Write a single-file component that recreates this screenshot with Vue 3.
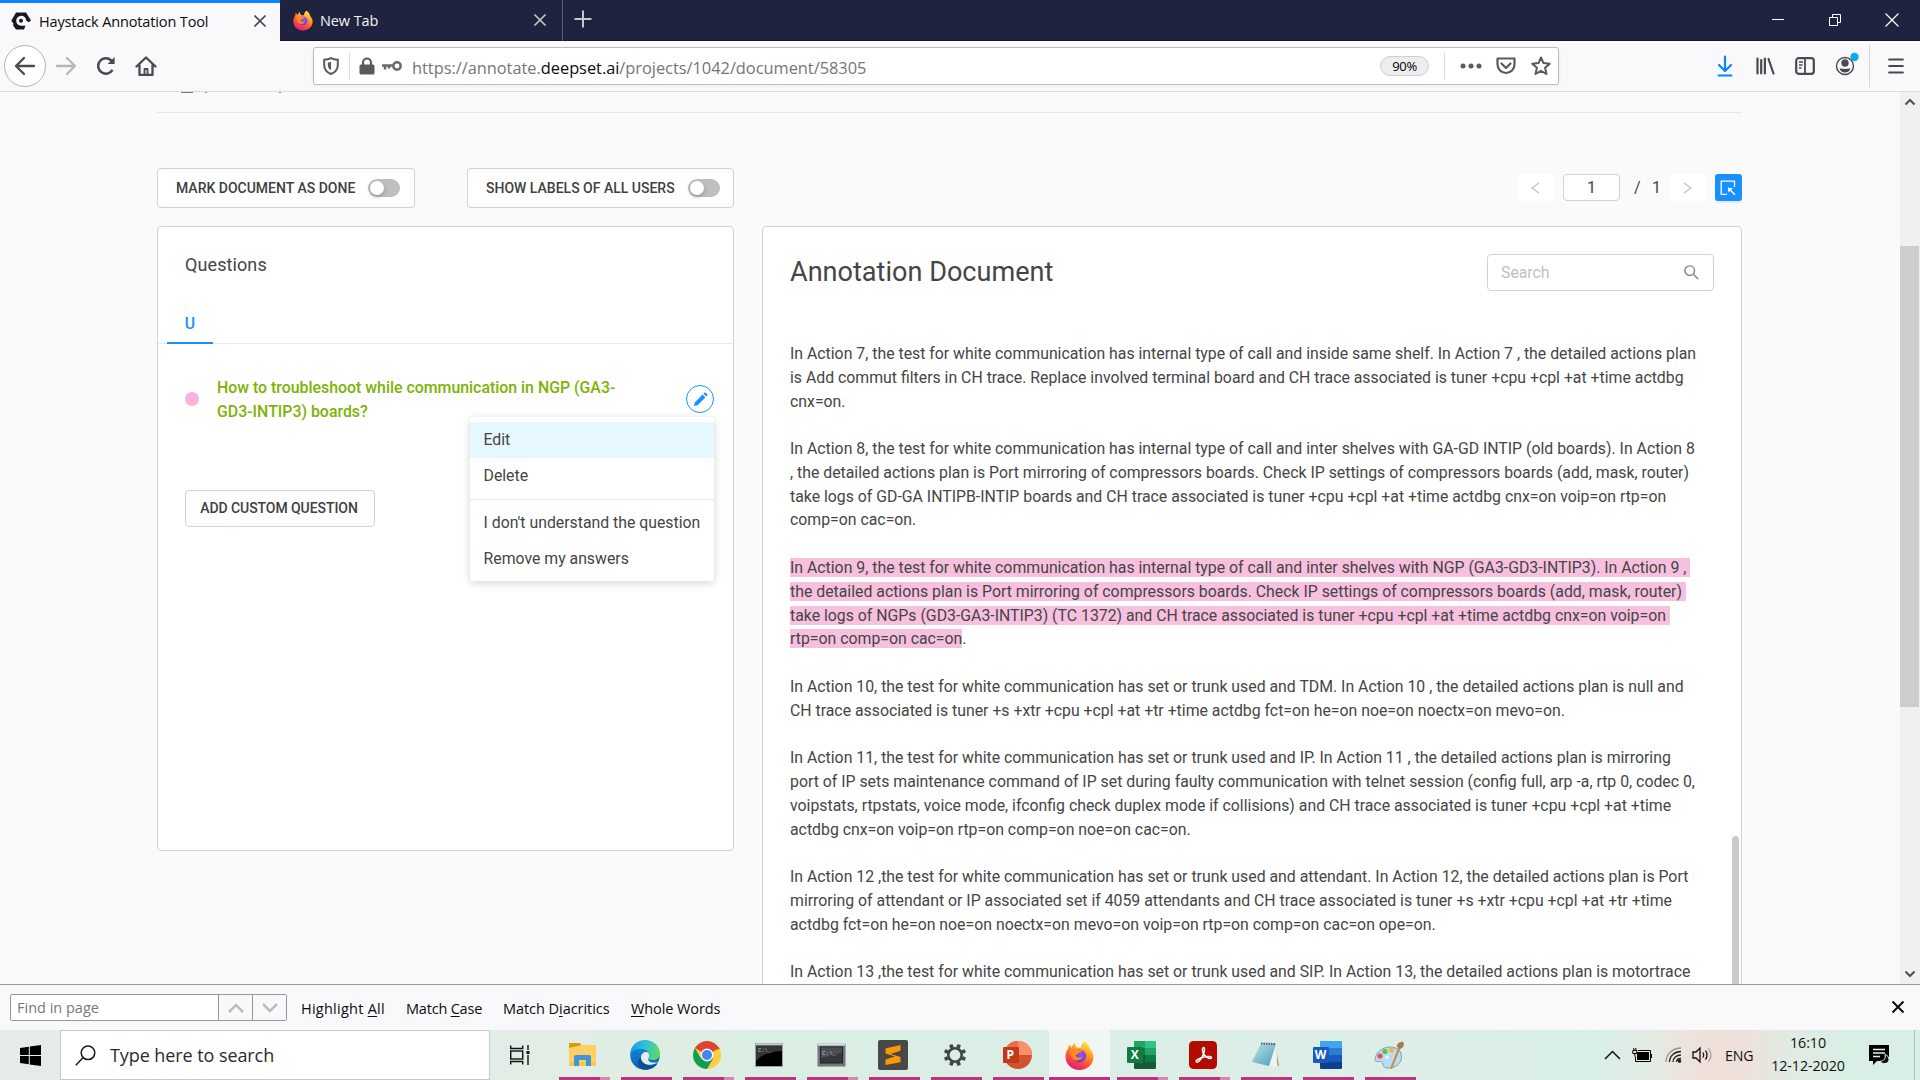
<script setup>
const paragraphs = [
  {
    text: `In Action 7, the test for white communication has internal type of call and inside same shelf. In Action 7 , the detailed actions plan
is Add commut filters in CH trace. Replace involved terminal board and CH trace associated is tuner +cpu +cpl +at +time actdbg
cnx=on.`
  },
  {
    text: `In Action 8, the test for white communication has internal type of call and inter shelves with GA-GD INTIP (old boards). In Action 8
, the detailed actions plan is Port mirroring of compressors boards. Check IP settings of compressors boards (add, mask, router)
take logs of GD-GA INTIPB-INTIP boards and CH trace associated is tuner +cpu +cpl +at +time actdbg cnx=on voip=on rtp=on
comp=on cac=on.`
  },
  {
    marked: true,
    tail: '.',
    text: `In Action 9, the test for white communication has internal type of call and inter shelves with NGP (GA3-GD3-INTIP3). In Action 9 , 
the detailed actions plan is Port mirroring of compressors boards. Check IP settings of compressors boards (add, mask, router) 
take logs of NGPs (GD3-GA3-INTIP3) (TC 1372) and CH trace associated is tuner +cpu +cpl +at +time actdbg cnx=on voip=on 
rtp=on comp=on cac=on`
  },
  {
    text: `In Action 10, the test for white communication has set or trunk used and TDM. In Action 10 , the detailed actions plan is null and
CH trace associated is tuner +s +xtr +cpu +cpl +at +tr +time actdbg fct=on he=on noe=on noectx=on mevo=on.`
  },
  {
    text: `In Action 11, the test for white communication has set or trunk used and IP. In Action 11 , the detailed actions plan is mirroring
port of IP sets maintenance command of IP set during faulty communication with telnet session (config full, arp -a, rtp 0, codec 0,
voipstats, rtpstats, voice mode, ifconfig check duplex mode if collisions) and CH trace associated is tuner +cpu +cpl +at +time
actdbg cnx=on voip=on rtp=on comp=on noe=on cac=on.`
  },
  {
    text: `In Action 12 ,the test for white communication has set or trunk used and attendant. In Action 12, the detailed actions plan is Port
mirroring of attendant or IP associated set if 4059 attendants and CH trace associated is tuner +s +xtr +cpu +cpl +at +tr +time
actdbg fct=on he=on noe=on noectx=on mevo=on voip=on rtp=on comp=on cac=on ope=on.`
  },
  {
    text: `In Action 13 ,the test for white communication has set or trunk used and SIP. In Action 13, the detailed actions plan is motortrace`
  }
]

const apps = [
  { id: 'explorer', multi: true },
  { id: 'edge' },
  { id: 'chrome', multi: true },
  { id: 'cmd' },
  { id: 'terminal', multi: true },
  { id: 'sublime' },
  { id: 'settings' },
  { id: 'powerpoint' },
  { id: 'firefox', active: true },
  { id: 'excel', multi: true },
  { id: 'acrobat', multi: true },
  { id: 'notepad' },
  { id: 'word' },
  { id: 'paint' }
]
const teeth = [0, 45, 90, 135, 180, 225, 270, 315]
</script>

<template>
  <div class="screen">
    <svg class="defs" width="0" height="0">
      <defs>
        <linearGradient id="ffBody" x1="0.8" y1="0" x2="0.3" y2="1">
          <stop offset="0" stop-color="#fff044" /><stop offset=".35" stop-color="#ffa21f" />
          <stop offset=".65" stop-color="#ff5236" /><stop offset="1" stop-color="#e31587" />
        </linearGradient>
        <radialGradient id="ffGlobe" cx=".6" cy=".3" r=".8">
          <stop offset="0" stop-color="#a24bf0" /><stop offset="1" stop-color="#5b3fd0" />
        </radialGradient>
        <linearGradient id="edgeTop" x1="0" y1=".4" x2="1" y2=".5">
          <stop offset="0" stop-color="#1c9be0" /><stop offset=".5" stop-color="#2fc3d6" /><stop offset="1" stop-color="#5fdc5b" />
        </linearGradient>
        <linearGradient id="edgeLow" x1="0" y1="0" x2="0" y2="1">
          <stop offset="0" stop-color="#1791dc" /><stop offset="1" stop-color="#0a62b4" />
        </linearGradient>
        <linearGradient id="padG" x1="0" y1="0" x2="1" y2="1">
          <stop offset="0" stop-color="#b9e2ea" /><stop offset="1" stop-color="#4a9fb5" />
        </linearGradient>
        <symbol id="firefox" viewBox="0 0 28 28">
          <path fill="url(#ffBody)" d="M19 .5c3 2.400 4.500 4.800 5.200 7.500 1.600 1.300 3.300 4.300 3.300 7.800C27.500 22.800 21.600 28 14 28S.5 22.500.5 15.300C.5 11.500 1.700 9 3.300 7L3.500 3.500c1 .6 2 1.600 2.600 2.700C7 4.500 8.500 2.500 9.800 2c-.2 1.900.5 3.500 2 4.500h3.500C15.600 4 17 2 19 .5z" />
          <circle cx="14.200" cy="14.500" r="6.200" fill="url(#ffGlobe)" />
          <path fill="#ff8a1f" d="M5.500 8.500c2.500-2 5.500-1 7.500.3h4c-.3 1.700-2.700 2.200-4 2.800-.5 1.600-2 1.600-3 2.600 1.300 2 4 2 7 .8-.8 3-4.500 4.600-7.700 3.200C5.400 16.500 4.500 12 5.500 8.500z" />
        </symbol>
      </defs>
    </svg>

    <header class="tabbar">
      <div class="tab active">
        <svg width="20" height="18" viewBox="0 0 20 18"><path fill="#16181c" d="M5 .5h10l5 8-2.200 1.700-2.600-1.700A5 5 0 1 0 10 13.800h4.500l-1.500 3.700H5L1.500 12.500H3L.3 8.800z" /><circle cx="10" cy="8.800" r="2" fill="#16181c" /></svg>
        <span class="title">Haystack Annotation Tool</span>
        <svg class="x" width="14" height="14" viewBox="0 0 14 14"><path d="M1.500 1.500l11 11m0-11l-11 11" stroke="#45454a" stroke-width="1.700" /></svg>
      </div>
      <div class="tab second">
        <svg width="20" height="21"><use href="#firefox" /></svg>
        <span class="title">New Tab</span>
        <svg class="x" width="14" height="14" viewBox="0 0 14 14"><path d="M1.500 1.500l11 11m0-11l-11 11" stroke="#c3c4cc" stroke-width="1.700" /></svg>
      </div>
      <svg class="plus" width="18" height="18" viewBox="0 0 18 18"><path d="M9 .5v17M.5 9h17" stroke="#c6c7d0" stroke-width="2" /></svg>
      <div class="winctl">
        <svg width="14" height="14" viewBox="0 0 14 14"><path d="M1 6.500h12" stroke="#fff" /></svg>
        <svg width="14" height="14" viewBox="0 0 14 14" fill="none" stroke="#fff"><path d="M1.500 4.500h8v8h-8zM4.500 4V1.500h8v8H10" /></svg>
        <svg width="14" height="14" viewBox="0 0 14 14"><path d="M.5.5l13 13m0-13l-13 13" stroke="#fff" stroke-width="1.200" /></svg>
      </div>
    </header>

    <div class="toolbar">
      <div class="nav">
        <span class="back"><svg width="22" height="20" viewBox="0 0 22 20" fill="none" stroke="#4a4a4e" stroke-width="2.300" stroke-linecap="round" stroke-linejoin="round"><path d="M20 10H2m8-8l-8 8 8 8" /></svg></span>
        <svg width="22" height="20" viewBox="0 0 22 20" fill="none" stroke="#b7b7ba" stroke-width="2.300" stroke-linecap="round" stroke-linejoin="round"><path d="M2 10h18m-8-8l8 8-8 8" /></svg>
        <svg width="20" height="20" viewBox="0 0 20 20" fill="none" stroke="#4a4a4e" stroke-width="2.500"><path d="M16.500 13.800A7.700 7.700 0 1 1 15 4.200l2 2.200" /><path d="M18.600 1v7h-7z" fill="#4a4a4e" stroke="none" /></svg>
        <svg width="22" height="20" viewBox="0 0 22 20" fill="none" stroke="#4a4a4e" stroke-width="2.300" stroke-linejoin="round" stroke-linecap="round"><path d="M1.500 10.500L11 1.500l9.500 9M4.500 9v10h13V9" /><path d="M9.500 19v-6h3v6" stroke-width="1.800" /></svg>
      </div>
      <div class="urlbar">
        <svg width="16" height="18" viewBox="0 0 16 18"><path d="M8 1.200c2 1 4.200 1.500 6.800 1.600V8c0 4.500-2.400 7.300-6.800 9-4.400-1.700-6.800-4.500-6.800-9V2.800C3.800 2.700 6 2.200 8 1.200z" fill="none" stroke="#5a5a5e" stroke-width="2" /><path d="M8 4.800v8.500c-2.200-1.300-3.200-3-3.200-5.300V5.500c1.300 0 2.300-.3 3.200-.7z" fill="#5a5a5e" /></svg>
        <i class="usep"></i>
        <svg width="16" height="18" viewBox="0 0 16 18"><rect x=".5" y="7.500" width="15" height="10" rx="1.500" fill="#5a5a5e" /><path d="M4 8V5.500a4 4 0 0 1 8 0V8" fill="none" stroke="#5a5a5e" stroke-width="2.200" /></svg>
        <svg class="key" width="20" height="12" viewBox="0 0 20 12" fill="none" stroke="#6a6a6e"><circle cx="15" cy="6" r="3.700" stroke-width="2.500" /><path d="M11 5.500H0M3 5.500v4M7 5.500v3" stroke-width="2.500" /></svg>
        <span class="url">https://annotate.<b>deepset.ai</b>/projects/1042/document/58305</span>
        <span class="zoom">90%</span>
        <i class="usep"></i>
        <svg class="dots" width="22" height="6" viewBox="0 0 22 6" fill="#5a5a5e"><circle cx="3" cy="3" r="2.500" /><circle cx="11" cy="3" r="2.500" /><circle cx="19" cy="3" r="2.500" /></svg>
        <svg class="pocket" width="20" height="18" viewBox="0 0 20 18" fill="none" stroke="#5a5a5e" stroke-width="2.200"><path d="M1.500 1.500h17v6a8.500 8.500 0 0 1-17 0z" stroke-linejoin="round" /><path d="M5.500 6.500l4.500 4.500 4.500-4.500" stroke-linecap="round" stroke-linejoin="round" /></svg>
        <svg class="star" width="20" height="20" viewBox="0 0 20 20" fill="none" stroke="#5a5a5e" stroke-width="2" stroke-linejoin="round"><path d="M10 1.500l2.500 5.600 6.200.6-4.600 4.100 1.400 6.200-5.500-3.200L4.500 18l1.400-6.200L1.300 7.700l6.200-.6z" /></svg>
      </div>
      <div class="tools">
        <svg width="16" height="22" viewBox="0 0 16 22" fill="none" stroke="#0a84ff" stroke-width="2.200" stroke-linecap="round" stroke-linejoin="round"><path d="M8 1.500v14M2 10l6 6 6-6M1.500 20.500h13" /></svg>
        <svg width="19" height="18" viewBox="0 0 19 18" stroke="#4a4a4e" stroke-width="2.200" stroke-linecap="round"><path d="M1.500 1.500v15M5.200 3v13.500M8.900 1.500v15M12.500 2l5 14.500" /></svg>
        <svg width="20" height="18" viewBox="0 0 20 18" fill="none" stroke="#4a4a4e" stroke-width="2.200"><rect x="1.200" y="1.200" width="17.600" height="15.600" rx="2.500" /><path d="M10 1v16" stroke-width="1.800" /><path d="M4 5h4M4 8h3.500M4 11h2.500" stroke-width="1.300" /></svg>
        <svg width="24" height="26" viewBox="0 0 24 26"><circle cx="10" cy="14" r="8.500" fill="none" stroke="#4a4a4e" stroke-width="1.400" /><circle cx="10" cy="11" r="3.700" fill="#4a4a4e" /><path d="M4.500 16c2 1.200 9 1.200 11 0-.5 3-3 4.500-5.500 4.500S5 19 4.500 16z" fill="#4a4a4e" /><circle cx="19.500" cy="5" r="4.200" fill="#0ca8f2" /></svg>
        <i class="tsep"></i>
        <svg width="16" height="16" viewBox="0 0 16 16" stroke="#4a4a4e" stroke-width="2.200" stroke-linecap="round"><path d="M1.200 1.500h13.600M1.200 8h13.600M1.200 14.500h13.600" /></svg>
      </div>
    </div>

    <div class="viewport">
      <main>
        <div class="crumb"><i class="c1"></i><i class="c2"></i><i class="c3"></i></div>
        <div class="controls">
          <div class="switchbox done"><span>MARK DOCUMENT AS DONE</span><i class="switch"></i></div>
          <div class="switchbox labels"><span>SHOW LABELS OF ALL USERS</span><i class="switch"></i></div>
          <div class="pager">
            <span class="pg"><svg width="9" height="12" viewBox="0 0 9 12"><path d="M8 1L1 6l7 5" fill="none" stroke="#bfbfbf" stroke-width="1.200" /></svg></span>
            <span class="cur">1</span>
            <span class="slash">/</span><span class="tot">1</span>
            <span class="pg"><svg width="9" height="12" viewBox="0 0 9 12"><path d="M1 1l7 5-7 5" fill="none" stroke="#bfbfbf" stroke-width="1.200" /></svg></span>
            <span class="select"><svg width="16" height="16" viewBox="0 0 16 16" fill="none" stroke="#fff" stroke-width="1.300"><path d="M7 14.300H1.200V1.200h13.300V7" /><path d="M15 14.800L9 8.800" stroke-width="1.500" /><path d="M7.800 7.500l5 .7-4.300 4.200z" fill="#fff" stroke="none" /></svg></span>
          </div>
        </div>
        <div class="panels">
          <section class="questions">
            <h3>Questions</h3>
            <div class="qtabs"><span>U</span></div>
            <div class="question">
              <i class="qdot"></i>
              <p>How to troubleshoot while communication in NGP (GA3-<br />GD3-INTIP3) boards?</p>
              <span class="pencil">
                <svg width="15" height="15" viewBox="0 0 15 15" fill="#1890ff"><path d="M1 14l.8-3.600 7.800-7.800 2.800 2.800-7.800 7.800zM10.400 1.800l1-1c.4-.4.9-.4 1.300 0l1.500 1.500c.4.4.4.9 0 1.300l-1 1z" /></svg>
                <div class="menu">
                  <div class="item on">Edit</div>
                  <div class="item">Delete</div>
                  <hr />
                  <div class="item">I don't understand the question</div>
                  <div class="item">Remove my answers</div>
                </div>
              </span>
            </div>
            <button class="add">ADD CUSTOM QUESTION</button>
          </section>
          <section class="document">
            <div class="dochead">
              <h2>Annotation Document</h2>
              <div class="search"><span>Search</span><svg width="15" height="15" viewBox="0 0 15 15" fill="none" stroke="#858585" stroke-width="1.400"><circle cx="5.700" cy="5.700" r="4.800" /><path d="M9.300 9.300l5 5" /></svg></div>
            </div>
            <div class="body">
              <p v-for="(p, i) in paragraphs" :key="i"><mark v-if="p.marked">{{ p.text }}</mark><template v-else>{{ p.text }}</template>{{ p.tail }}</p>
            </div>
            <i class="innerbar"></i>
          </section>
        </div>
      </main>
      <aside class="scroll">
        <svg width="12" height="8" viewBox="0 0 12 8"><path d="M1.500 6.500L6 2l4.500 4.500" fill="none" stroke="#505050" stroke-width="2" /></svg>
        <i class="thumb"></i>
        <svg width="12" height="8" viewBox="0 0 12 8"><path d="M1.500 1.500L6 6l4.500-4.500" fill="none" stroke="#505050" stroke-width="2" /></svg>
      </aside>
    </div>

    <div class="findbar">
      <div class="findbox">
        <span class="fin">Find in page</span>
        <span class="fb"><svg width="18" height="12" viewBox="0 0 18 12"><path d="M2 10l7-7 7 7" fill="none" stroke="#bdbdc0" stroke-width="2.500" /></svg></span>
        <span class="fb"><svg width="18" height="12" viewBox="0 0 18 12"><path d="M2 2l7 7 7-7" fill="none" stroke="#bdbdc0" stroke-width="2.500" /></svg></span>
      </div>
      <span class="opt o1">Highlight <u>A</u>ll</span>
      <span class="opt o2">Match <u>C</u>ase</span>
      <span class="opt o3">Match D<u>i</u>acritics</span>
      <span class="opt o4"><u>W</u>hole Words</span>
      <svg class="fclose" width="14" height="14" viewBox="0 0 14 14"><path d="M1.500 1.500l11 11m0-11l-11 11" stroke="#0c0c0d" stroke-width="2" /></svg>
    </div>

    <footer class="taskbar">
      <div class="start"><svg width="21" height="21" viewBox="0 0 21 21"><path d="M0 3l8.800-1.200V10H0zM9.800 1.600L21 0v10H9.800zM0 11h8.800v8.200L0 18zM9.800 11H21v10L9.800 19.400z" /></svg></div>
      <div class="tsearch">
        <svg width="21" height="21" viewBox="0 0 21 21" fill="none" stroke="#1a1a1a" stroke-width="1.500"><circle cx="13" cy="7.800" r="6.800" /><path d="M8.200 12.600L.8 20.200" /></svg>
        <span>Type here to search</span>
      </div>
      <div class="taskview"><svg width="22" height="20" viewBox="0 0 22 20" fill="none" stroke="#111" stroke-width="1.400"><path d="M1.700.5v3h12v-3M1.700 19.500v-3h12v3" /><rect x="1.700" y="6" width="12" height="8" /><path d="M19 0v5M19 10v10" /><path d="M17.500 6h3v3h-3z" fill="#111" stroke="none" /></svg></div>
      <div v-for="a in apps" :key="a.id" class="app" :class="{ active: a.active, multi: a.multi }">
        <svg v-if="a.id === 'explorer'" width="30" height="30" viewBox="0 0 30 30"><path d="M1 3h11l2 3v4H1z" fill="#d69a14" /><path d="M1 8l13-3h14v21H1z" fill="#fdd063" /><path d="M1 22h27v4H1z" fill="#f9c74a" /><path d="M6 26V17q0-2 2-2h13q2 0 2 2v9h-5v-6h-7v6z" fill="#3f97d3" /></svg>
        <svg v-else-if="a.id === 'edge'" width="30" height="30" viewBox="0 0 30 30"><circle cx="15" cy="15" r="14.800" fill="url(#edgeLow)" /><path d="M.3 14C1 5 7.500.2 15 .2 24 .2 30 7 30 13.500c0 4-3 6.500-7 6.500-3.500 0-5-1.500-4.500-2.300 1.500-2 1-4.500-.5-6C14 7.500 4 7.500.3 14z" fill="url(#edgeTop)" /><path d="M10.500 17c0 6 6 9.500 11 8.500 2.500-.5 5-1.500 6-2-2.500 4-7.500 6.500-12.500 6.300C8 29 6.500 21 10.500 17z" fill="#104d91" /><path d="M18.500 17.700c1.500-2 .8-4.500-1-5.500-4-1-6.500 2-6.500 5 0 5 5 8 10 7.500 3-.3 5.500-1.500 6.500-2.700-3.500 1.200-10.500 1-9-4.300z" fill="#e2eeea" /></svg>
        <svg v-else-if="a.id === 'chrome'" width="28" height="28" viewBox="0 0 28 28"><circle cx="14" cy="14" r="14" fill="#ffcd40" /><path d="M14 14L1.900 7A14 14 0 0 1 26.100 7z" fill="#db4437" /><path d="M1.900 7A14 14 0 0 0 14 28l6.100-10.500L14 14 8 17.500z" fill="#0f9d58" /><path d="M14 7.500h12.400" stroke="#db4437" stroke-width="1.500" /><circle cx="14" cy="14" r="6.400" fill="#f4f6f4" /><circle cx="14" cy="14" r="5" fill="#4285f4" /></svg>
        <svg v-else-if="a.id === 'cmd'" width="28" height="24" viewBox="0 0 28 24"><rect x=".5" y=".5" width="27" height="23" fill="#000" stroke="#9ba3a0" /><path d="M1 3h26v5Q8 9 1 18z" fill="#343638" /><path d="M1 1.500h26" stroke="#c9cfcc" stroke-width="2" /><text x="3" y="8.500" class="glyph small">C:\_</text></svg>
        <svg v-else-if="a.id === 'terminal'" width="29" height="24" viewBox="0 0 29 24"><rect x=".5" y=".5" width="28" height="23" rx="1" fill="#72787c" stroke="#a8aeb1" /><path d="M1 1.500h27" stroke="#e3e8e8" stroke-width="2" /><rect x="3.500" y="4" width="22" height="16" fill="#36383c" stroke="#1f2124" /><path d="M4 4.500h21v5L4 15z" fill="#4c4f54" /><text x="5" y="11.500" class="glyph">C:\_</text></svg>
        <svg v-else-if="a.id === 'sublime'" width="30" height="30" viewBox="0 0 30 30"><rect width="30" height="30" rx="2" fill="#484848" /><path d="M22.500 5v5.800L12.500 14l10 3v5.200L7.500 25v-5.400l9.500-3.200-9.500-2.800V8.600z" fill="#ff9800" /></svg>
        <svg v-else-if="a.id === 'settings'" width="24" height="24" viewBox="-12 -12 24 24"><circle r="6.700" fill="none" stroke="#3e4743" stroke-width="2.600" /><path v-for="t in teeth" :key="t" d="M-2-7.500l.3-3.700h3.400l.3 3.700z" :transform="`rotate(${t + 22.5})`" fill="#3e4743" /></svg>
        <svg v-else-if="a.id === 'powerpoint'" width="30" height="30" viewBox="0 0 30 30"><circle cx="16" cy="15" r="14" fill="#d35230" /><path d="M2 15A14 14 0 0 1 16 1v14z" fill="#ed6c47" /><path d="M16 1a14 14 0 0 1 14 14H16z" fill="#ff8f6b" /><rect x="1" y="7" width="16" height="16" rx="1" fill="#c13b1b" /><text x="4.500" y="19.200" class="letter">P</text></svg>
        <svg v-else-if="a.id === 'firefox'" width="29" height="29"><use href="#firefox" /></svg>
        <svg v-else-if="a.id === 'excel'" width="30" height="30" viewBox="0 0 30 30"><rect x="8" y="1" width="22" height="28" rx="1" fill="#185c37" /><path d="M8 1h11v14H8z" fill="#21a366" /><path d="M19 1h11v7H19z" fill="#33c481" /><path d="M19 8h11v7H19z" fill="#21a366" /><path d="M8 8h11v7H8zM19 15h11v7H19z" fill="#107c41" /><rect x="1" y="7" width="16" height="16" rx="1" fill="#107c41" /><text x="4.800" y="19.200" class="letter">X</text></svg>
        <svg v-else-if="a.id === 'acrobat'" width="28" height="28" viewBox="0 0 28 28"><rect width="28" height="28" rx="4.500" fill="#b30b00" /><path d="M14.500 13c-3-8 2.200-8.300.8-2.500-1 4-3.800 8.500-6 10.200-2 1.300-3.200-.6-1-2 3-2 8-3.700 12.200-3.200 3.300.5 2 2.800-.7 1.800-2-.8-4-2.500-5.300-4.300z" fill="none" stroke="#fff" stroke-width="1.500" /></svg>
        <svg v-else-if="a.id === 'notepad'" width="29" height="28" viewBox="0 0 29 28"><path d="M24 3l4 22-5-2z" fill="#9c8449" /><path d="M18 24L25 3l1.500 21.500-4 2.500z" fill="#f1f3f2" /><path d="M10 2.500L25 3l-7 22-17-4z" fill="url(#padG)" /><path d="M10 2.500L25 3" stroke="#56646a" stroke-width="2" stroke-dasharray="1.500 1" /></svg>
        <svg v-else-if="a.id === 'word'" width="30" height="30" viewBox="0 0 30 30"><rect x="8" y="1" width="22" height="28" rx="1" fill="#103f91" /><path d="M8 1h22v7H8z" fill="#41a5ee" /><path d="M8 8h22v7H8z" fill="#2b7cd3" /><path d="M8 15h22v7H8z" fill="#185abd" /><rect x="1" y="7" width="16" height="16" rx="1" fill="#185abd" /><text x="2.800" y="19.200" class="letter">W</text></svg>
        <svg v-else width="30" height="29" viewBox="0 0 30 29"><path d="M1 18C2 11 9 6 16 6c7 0 12 4 11.500 10.500C27 23 21 27.500 13 27c-5-.3-3-4.500-5.500-6S.7 22 1 18z" fill="#b9dcf2" stroke="#6fa3c9" /><circle cx="6" cy="15" r="2.600" fill="#e05545" /><circle cx="11" cy="10.500" r="2.600" fill="#6abb3e" /><circle cx="17.500" cy="9" r="2.600" fill="#edb93a" /><circle cx="13" cy="16.500" r="1.800" fill="#eaf4fa" /><path d="M16 27.500L24.500 6l2 1L18 28z" fill="#d08a3c" /><path d="M23 6q-1-4 5-5.500L30 2q0 5-4 6z" fill="#a87c52" /></svg>
        <i class="bar"></i>
      </div>
      <div class="tray">
        <svg class="t1" width="17" height="10" viewBox="0 0 17 10"><path d="M1 9l7.500-7.500L16 9" fill="none" stroke="#111" stroke-width="1.500" /></svg>
        <svg class="t2" width="20" height="14" viewBox="0 0 20 14"><rect x="5" y="4" width="12" height="8" fill="#000" /><path d="M6 2.500h12.500v11h-15V8.500M19.500 6v4M2.800 5v3.500" fill="none" stroke="#000" /><path d="M.8 2.500h4v3h-4zM1.800 0v2M3.800 0v2" fill="none" stroke="#000" /></svg>
        <svg class="t3" width="18" height="16" viewBox="0 0 18 16" fill="none" stroke="#222" stroke-width="1.300"><path d="M1 15C1 7 8 1 16 1" stroke="#9a938e" /><path d="M4.500 15c0-6 5-10.500 11.500-10.500M8 15c0-4 3.500-7 8-7M11.500 15c0-2.500 2-3.500 4.500-3.500" /><circle cx="14.500" cy="14" r="1.200" fill="#000" /></svg>
        <svg class="t4" width="21" height="18" viewBox="0 0 21 18" fill="none" stroke="#111" stroke-width="1.300"><path d="M1 6h3l4-4v14l-4-4H1z" /><path d="M11 6.500q1.500 2.500 0 5M13.500 4.500q3 4.500 0 9" /><path d="M16.500 2.500q5 6.500 0 13" stroke="#a8a39e" /></svg>
        <span class="lang">ENG</span>
        <div class="clock"><span>16:10</span><span class="date">12-12-2020</span></div>
        <svg class="note" width="21" height="20" viewBox="0 0 21 20"><path d="M0 0h20v16H8l-4 4v-4H0z" /><path d="M4 4.500h12M4 8h12M4 11.500h7" stroke="#e4f1ea" stroke-width="1.300" /><path d="M16 9.500c1 4-1 6.500-5 6.800 2 3.500 8.500 3 9-1.500.2-2.500-1.500-4.500-4-5.300z" fill="#111" stroke="#e4f1ea" /></svg>
        <i class="edgeline"></i>
      </div>
    </footer>
  </div>
</template>

<style>
html, body { margin: 0; background: #fafafa; overflow: hidden; }
</style>

<style scoped>
* { box-sizing: border-box; }
.screen { width: 1920px; height: 1080px; display: flex; flex-direction: column; overflow: hidden; font-family: "Open Sans", "Noto Sans", sans-serif; }
.screen svg { display: block; flex: none; }
.defs { position: absolute; }
i { display: block; font-style: normal; }
span { white-space: nowrap; }

.tabbar { height: 41px; flex: none; background: #20233f; display: flex; align-items: center; border-bottom: 1px solid #14162b; }
.tab { height: 41px; display: flex; align-items: center; font-size: 14.5px; }
.tab .x { margin-left: auto; }
.tab.active { width: 280px; background: #f9f9fb; border-top: 3px solid #0a84ff; padding: 0 13px 1px 11px; color: #0c0c0d; }
.tab .title { padding-top: 1px; }
.tab.active .title { margin-left: 8px; letter-spacing: -.14px; }
.tab.second { width: 283px; border-right: 1px solid #5d5f74; padding: 0 15px 0 13px; color: #f3f3f6; }
.tab.second .title { margin-left: 7px; letter-spacing: -.1px; }
.plus { margin-left: 11px; margin-bottom: 2px; }
.winctl { margin-left: auto; display: flex; gap: 43px; padding-right: 21px; }

.toolbar { height: 51px; flex: none; background: #f9f9fb; border-bottom: 1px solid #dcdcde; display: flex; align-items: center; }
.nav { width: 313px; display: flex; align-items: center; padding-left: 4px; }
.nav .back { width: 42px; height: 42px; border: 1px solid #b4b4b8; border-radius: 50%; background: #fff; display: flex; align-items: center; justify-content: center; margin-right: 9px; }
.nav svg + svg { margin-left: 19px; }
.urlbar { width: 1246px; height: 38px; border: 1px solid #bcbcbe; border-radius: 3px; background: #fff; display: flex; align-items: center; padding-left: 9px; box-shadow: 0 1px 4px rgba(0,0,0,.06); }
.usep { width: 1px; height: 26px; background: #dcdcde; margin: 0 9px 0 10px; }
.key { margin-left: 7px; }
.url { margin-left: 10px; padding-top: 2px; font-size: 16.400px; color: #757578; letter-spacing: -.03px; }
.url b { font-weight: 400; color: #0c0c0d; }
.zoom { margin-left: auto; width: 49px; height: 20px; border-radius: 10px; background: #ededf0; border: 1px solid #d0d0d2; font-size: 13px; line-height: 19px; text-align: center; letter-spacing: -.3px; }
.zoom + .usep { margin-left: 15px; margin-right: 15px; }
.pocket { margin-left: 14px; }
.star { margin: 0 7px 0 15px; }
.tools { flex: 1; display: flex; align-items: center; padding-left: 158px; }
.tools svg:nth-child(2) { margin-left: 23px; }
.tools svg:nth-child(3) { margin-left: 20px; }
.tools svg:nth-child(4) { margin: 0 0 3px 20px; }
.tsep { width: 1px; height: 42px; background: #d7d7db; margin: 0 18px 0 10px; }

.viewport { height: 892px; flex: none; display: flex; background: #fafafa; overflow: hidden; font-family: Roboto, sans-serif; color: #454545; }
main { flex: 1; padding: 0 158px 0 157px; }
.crumb { height: 21px; border-bottom: 1px solid #e6e6e6; display: flex; }
.c1 { width: 12px; height: 1px; background: #777; margin-left: 24px; }
.c2, .c3 { width: 2px; height: 1px; background: #888; margin-left: 12px; }
.c3 { margin-left: 72px; }
.controls { margin-top: 55px; display: flex; height: 40px; }
.switchbox { border: 1px solid #d2d2d2; border-radius: 4px; background: #fff; display: flex; align-items: center; justify-content: space-between; font-weight: 500; font-size: 14px; color: #404040; height: 40px; }
.done { width: 258px; padding: 0 14px 0 18px; }
.labels { width: 267px; margin-left: 52px; padding: 0 13px 0 18px; }
.switch { width: 32px; height: 18px; border-radius: 9px; background: #bfbfbf; padding: 2px; }
.switch::before { content: ""; display: block; width: 14px; height: 14px; border-radius: 50%; background: #fff; box-shadow: 0 2px 4px rgba(0,35,11,.25); }
.pager { margin-left: auto; padding-top: 6px; display: flex; font-size: 16px; line-height: 27px; }
.pg { width: 36px; height: 27px; background: #fff; border-radius: 3px; display: flex; align-items: center; justify-content: center; padding-right: 2px; }
.cur { width: 57px; height: 27px; margin-left: 9px; border: 1px solid #d2d2d2; border-radius: 4px; background: #fff; text-align: center; line-height: 25px; }
.slash { margin-left: 14px; width: 7px; }
.tot { margin: 0 10px 0 11px; width: 8px; }
.select { width: 27px; height: 27px; margin-left: 9px; background: #1890ff; border-radius: 3px; display: flex; align-items: center; justify-content: center; box-shadow: 0 2px 0 rgba(24,144,255,.1); padding-right: 1px; }
.panels { display: flex; margin-top: 18px; align-items: flex-start; }
.questions { width: 577px; height: 625px; background: #fff; border: 1px solid #d2d2d2; border-radius: 4px; }
h3 { margin: 26px 0 0 27px; font-size: 18px; font-weight: 400; line-height: 24px; letter-spacing: .1px; }
.qtabs { margin-top: 28px; height: 39px; border-bottom: 1px solid #e8e8e8; padding-left: 9px; }
.qtabs span { display: block; width: 46px; height: 39px; text-align: center; font-size: 15.75px; font-weight: 500; line-height: 37px; color: #1890ff; border-bottom: 2px solid #1890ff; }
.question { display: flex; align-items: center; margin-top: 31px; padding: 0 19px 0 27px; height: 48px; }
.qdot { width: 14px; height: 14px; border-radius: 50%; background: #f7b3da; }
.question p { margin: 1px 0 0 18px; font-size: 15.880px; font-weight: 500; line-height: 24px; color: #7cb305; white-space: nowrap; }
.pencil { position: relative; margin-left: auto; width: 28px; height: 28px; border: 1px solid #1890ff; border-radius: 50%; display: flex; align-items: center; justify-content: center; }
.menu { position: absolute; right: -1px; top: 31px; width: 244px; height: 164px; background: #fff; border-radius: 3px; box-shadow: 0 2px 9px rgba(0,0,0,.17); padding: 5px 0; font-size: 15.82px; }
.item { height: 36px; line-height: 36px; padding-left: 13.500px; }
.item.on { background: #e6f7ff; }
.menu hr { border: 0; height: 1px; background: #e6e6e6; margin: 5px 0; }
.add { display: block; margin: 67px 0 0 27px; width: 190px; height: 37px; border: 1px solid #d2d2d2; border-radius: 4px; background: #fff; font: 500 14px Roboto, sans-serif; color: #404040; padding: 0 2px 1px 0; letter-spacing: -.06px; }
.document { position: relative; width: 980px; height: 860px; margin-left: 28px; background: #fff; border: 1px solid #d2d2d2; border-radius: 4px; padding: 27px 27px 0; }
.dochead { display: flex; justify-content: space-between; height: 38px; }
h2 { margin: 0; font-size: 27.080px; font-weight: 400; line-height: 36px; }
.search { width: 227px; height: 37px; border: 1px solid #d2d2d2; border-radius: 4px; display: flex; align-items: center; justify-content: space-between; padding: 0 14px 0 13px; font-size: 15.82px; color: #bfbfbf; }
.body { margin-top: 50px; }
.body p { margin: 0 0 23.780px; font-size: 15.833px; line-height: 23.780px; white-space: pre; }
mark { background: #f8c0df; color: inherit; }
.innerbar { position: absolute; right: 2px; top: 609px; width: 7px; height: 260px; border-radius: 4px; background: #cacaca; }
.scroll { width: 20px; background: #f0f0f0; display: flex; flex-direction: column; align-items: center; padding: 6px 0 6px; }
.scroll .thumb { width: 20px; height: 461px; margin: 140px 0 auto; background: #cdcdcd; border-right: 1px solid #f0f0f0; }

.findbar { height: 46px; flex: none; border-top: 1px solid #98989c; background: #f9f9fb; display: flex; align-items: center; padding-left: 10px; font-size: 14.500px; color: #0c0c0d; }
.findbox { width: 277px; height: 27px; border: 1px solid #98989c; border-radius: 2px; background: #fff; display: flex; }
.fin { flex: 1; padding-left: 6px; line-height: 26px; color: #78787b; letter-spacing: 0; }
.fb { width: 34px; border-left: 1px solid #98989c; background: #f9f9fb; display: flex; align-items: center; justify-content: center; }
.opt { margin-bottom: -1px; letter-spacing: -.2px; }
.opt u { text-underline-offset: 2px; }
.o1 { margin-left: 14px; width: 105px; letter-spacing: .25px; }
.o2 { width: 97px; }
.o3 { width: 128px; letter-spacing: -.05px; }
.o4 { letter-spacing: -.1px; }
.fclose { margin: 0 15px 1px auto; }

.taskbar { height: 50px; flex: none; display: flex; background: linear-gradient(90deg, #e6ebe7 0, #e2ede6 550px, #dbeee4 760px, #dceee6 1450px, #d9efe6 1600px, #e3ebe3 1650px, #f0e0da 1700px, #efdfd9 1740px, #e0ebe3 1790px, #d9eee4 1850px, #d8efe5 1920px); }
.start { width: 60px; display: flex; align-items: center; padding-left: 20px; }
.tsearch { width: 430px; height: 50px; background: #fff; border: 1px solid #c8c8c8; display: flex; align-items: center; padding-left: 14px; font-size: 18px; color: #2b2b2b; }
.tsearch span { margin-left: 14px; letter-spacing: -.08px; }
.taskview { width: 63px; display: flex; align-items: center; padding-left: 19px; }
.app { position: relative; width: 62px; height: 50px; display: flex; align-items: center; justify-content: center; }
.app svg { position: relative; margin-right: 2px; }
.app.active::before { content: ""; position: absolute; inset: 0 1px 0 0; background: #f0f7f3; }
.bar { position: absolute; left: 6px; right: 5px; bottom: 0; height: 3px; background: #bd3380; }
.active .bar { left: 0; right: 1px; }
.multi .bar { border-right: 10px solid #d885b2; }
.glyph { font: 6px "Liberation Mono", monospace; fill: #c8c8c8; }
.glyph.small { font-size: 5.5px; }
.letter { font: 700 12px "Open Sans", sans-serif; fill: #fff; }
.tray { flex: 1; display: flex; align-items: center; color: #111; }
.t1 { margin-left: 183px; }
.t2 { margin-left: 11px; }
.t3 { margin-left: 13px; }
.t4 { margin-left: 9px; }
.lang { width: 29px; margin-left: 12px; font-size: 14.200px; letter-spacing: -.1px; padding-top: 1px; }
.clock { width: 82px; margin-left: 13px; display: flex; flex-direction: column; align-items: center; font-size: 14.300px; line-height: 22.500px; letter-spacing: -.1px; padding-bottom: 1px; }
.note { margin-left: 20px; }
.edgeline { width: 1px; height: 50px; background: #aebdb5; margin: 0 5px 0 auto; }
</style>
